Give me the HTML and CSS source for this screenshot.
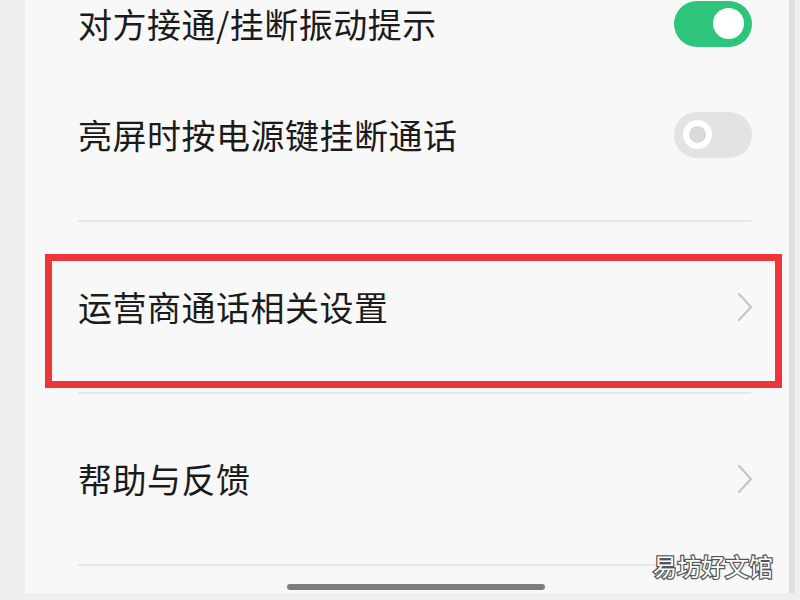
FILE: index.html
```html
<!DOCTYPE html>
<html lang="zh-CN">
<head>
<meta charset="utf-8">
<link rel="stylesheet" href="styles.css">
</head>
<body>
<div class="screen">
  <div class="panel">
    <div class="list">
      <div class="row">
        <span class="label">对方接通/挂断振动提示</span>
        <span class="switch on"><span class="knob"></span></span>
      </div>
      <div class="row">
        <span class="label">亮屏时按电源键挂断通话</span>
        <span class="switch off"><span class="knob"></span></span>
      </div>
      <div class="spacer"></div>
      <div class="divider"></div>
      <div class="row tall">
        <span class="label">运营商通话相关设置</span>
        <svg class="chev" width="16" height="30" viewBox="0 0 16 30"><polyline points="2,2 14,15 2,28" fill="none" stroke="#c6c6c6" stroke-width="2.2" stroke-linecap="round" stroke-linejoin="round"/></svg>
      </div>
      <div class="divider"></div>
      <div class="row tall">
        <span class="label">帮助与反馈</span>
        <svg class="chev" width="16" height="30" viewBox="0 0 16 30"><polyline points="2,2 14,15 2,28" fill="none" stroke="#c6c6c6" stroke-width="2.2" stroke-linecap="round" stroke-linejoin="round"/></svg>
      </div>
      <div class="divider"></div>
      <div class="homebar"></div>
    </div>
  </div>
  <div class="scroll"></div>
</div>
<div class="highlight"></div>
<div class="watermark">易坊好文馆</div>
</body>
</html>
```
FILE: styles.css
```css
html, body {
  margin: 0;
  padding: 0;
  background: #efefef;
  width: 800px;
  height: 600px;
  overflow: hidden;
  font-family: "Noto Sans CJK SC", "Noto Sans", sans-serif;
}
.screen {
  display: flex;
  height: 593px;
  padding-left: 25px;
}
.panel {
  width: 764px;
  height: 593px;
  background: #f8f8f8;
  overflow: hidden;
}
.scroll {
  width: 6px;
  height: 593px;
  background: #e0e0e0;
}
.list {
  margin-top: -32px;
}
.row {
  height: 111px;
  display: flex;
  align-items: center;
  justify-content: space-between;
  padding: 0 37px 0 53px;
}
.row.tall {
  height: 170px;
}
.label {
  font-size: 34px;
  letter-spacing: 0.5px;
  color: #1b1b1b;
  line-height: 1;
}
.spacer {
  height: 30px;
}
.divider {
  height: 2px;
  background: #e7e7e7;
  margin: 0 38px 0 53px;
}
.switch {
  width: 78px;
  height: 46px;
  border-radius: 23px;
  display: flex;
  align-items: center;
  box-sizing: border-box;
}
.switch.on {
  background: #2dc57b;
  justify-content: flex-end;
  padding-right: 8px;
}
.switch.on .knob {
  width: 31px;
  height: 31px;
  border-radius: 50%;
  background: #ffffff;
}
.switch.off {
  background: #e3e3e3;
  padding-left: 9px;
}
.switch.off .knob {
  width: 17px;
  height: 17px;
  border-radius: 50%;
  background: #d9d9d9;
  border: 6px solid #ffffff;
}
.chev {
  display: block;
  margin-right: -1px;
}
.homebar {
  width: 258px;
  height: 6px;
  border-radius: 3px;
  background: #7d7d7d;
  margin: 18px 0 0 262px;
}
.highlight {
  position: absolute;
  left: 45px;
  top: 254px;
  width: 737px;
  height: 134px;
  box-sizing: border-box;
  border: 7px solid #ee3539;
}
.watermark {
  position: absolute;
  left: 653px;
  top: 553px;
  font-size: 24px;
  line-height: 1.1;
  color: #ffffff;
  -webkit-text-stroke: 2.5px #555555;
  paint-order: stroke fill;
  letter-spacing: 0;
}
```
